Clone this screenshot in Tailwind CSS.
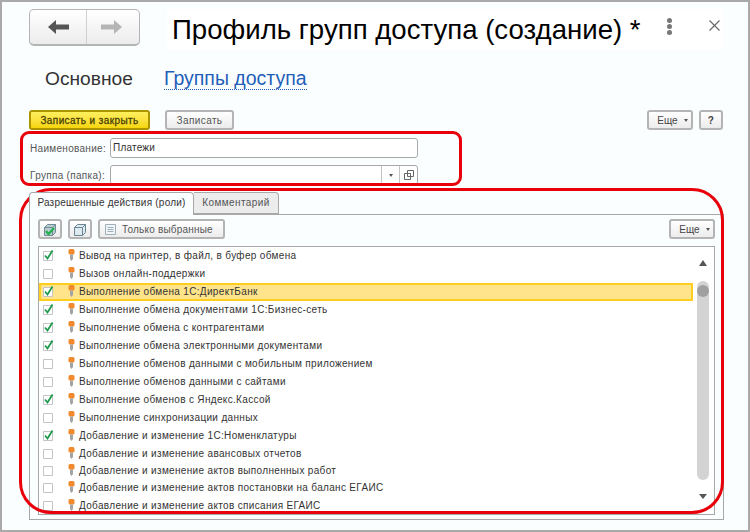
<!DOCTYPE html>
<html lang="en">
<head>
  <meta charset="UTF-8" />
  <title>Профиль групп доступа</title>
  <script src="https://cdn.jsdelivr.net/npm/@tailwindcss/browser@4"></script>
</head>
<body class="m-0 bg-white">
<div class="relative w-[750px] h-[532px] overflow-hidden bg-[#fbfeff] border-2 border-[#a9a9a9] font-['Liberation_Sans',sans-serif] text-[#333]">

  <!-- header -->
  <div class="flex items-start pl-[27px] pt-[7px] h-[57px]">
    <div class="flex w-[111px] h-[37px] rounded-[5px] border border-[#b4b4b4] border-b-2 bg-gradient-to-b from-white to-[#ececec]">
      <div class="w-[57px] flex items-center justify-center border-r border-[#d0d0d0]">
        <svg width="21" height="14" viewBox="0 0 21 14"><path d="M0 7 8 0v4.500h13v5H8V14z" fill="#555"/></svg>
      </div>
      <div class="flex-1 flex items-center justify-center pr-[4px]">
        <svg width="21" height="14" viewBox="0 0 21 14"><path d="M21 7 13 0v4.500H0v5h13V14z" fill="#b5b5b5"/></svg>
      </div>
    </div>
    <div class="ml-[27px] w-[556px] h-[41px] bg-white flex items-center pl-[5px] relative">
      <span class="text-[27.6px] text-black whitespace-nowrap leading-none">Профиль групп доступа (создание) *</span>
      <span class="absolute left-[500px] top-[9px] flex flex-col gap-[1px]">
        <i class="block w-[5px] h-[5px] rounded-full bg-[#777]"></i>
        <i class="block w-[5px] h-[5px] rounded-full bg-[#777]"></i>
        <i class="block w-[5px] h-[5px] rounded-full bg-[#777]"></i>
      </span>
      <svg class="absolute left-[542px] top-[11px]" width="11" height="11" viewBox="0 0 11 11"><path d="M.5.5l10 10M10.500.5l-10 10" stroke="#666" stroke-width="1.100" fill="none"/></svg>
    </div>
  </div>

  <!-- page tabs -->
  <div class="flex items-start pl-[43px] pt-[9px] h-[51px] text-[19.2px] leading-[21px]">
    <span class="text-[#333]">Основное</span>
    <span class="ml-[31px] text-[19.5px] text-[#1f5fb8] border-b border-dotted border-[#1f5fb8]">Группы доступа</span>
  </div>

  <!-- command bar -->
  <div class="flex items-center pl-[27px] pr-[25px] h-[20px] text-[10px] tracking-[0.4px]">
    <button class="w-[121px] h-[20px] rounded-[3px] border-2 border-[#ad9500] bg-gradient-to-b from-[#ffef5c] to-[#f6d600] text-[#4a4200] [-webkit-text-stroke:0.3px_#4a4200]">Записать и закрыть</button>
    <button class="ml-[15px] w-[69px] h-[20px] rounded-[3px] border-2 border-[#b4b4b4] bg-gradient-to-b from-white to-[#ececec] text-[#555]">Записать</button>
    <button class="ml-auto w-[46px] h-[20px] rounded-[3px] border-2 border-[#b4b4b4] bg-gradient-to-b from-white to-[#ececec] text-[#444] tracking-normal flex items-center justify-center gap-[6px] pl-[5px]">Еще <i class="block border-x-[2.5px] border-x-transparent border-t-[3px] border-t-[#555]"></i></button>
    <button class="ml-[6px] w-[24px] h-[20px] rounded-[3px] border-2 border-[#b4b4b4] bg-gradient-to-b from-white to-[#ececec] font-bold text-[#444]">?</button>
  </div>

  <!-- fields -->
  <div class="pl-[28px] pt-[8px] text-[10px] tracking-[0.3px] text-[#555]">
    <div class="flex items-center h-[20px]">
      <span class="w-[80px] whitespace-nowrap">Наименование:</span>
      <div class="w-[308px] h-[20px] rounded-[3px] border border-[#a8a8a8] bg-white pl-[2px] leading-[18px] text-[#333] tracking-[0.2px]">Платежи</div>
    </div>
    <div class="flex items-center h-[20px] mt-[7px]">
      <span class="w-[80px] whitespace-nowrap">Группа (папка):</span>
      <div class="flex w-[308px] h-[20px] rounded-[3px] border border-[#a8a8a8] bg-white">
        <div class="flex-1"></div>
        <div class="w-[18px] border-l border-[#c4c4c4] flex items-center justify-center"><i class="block border-x-[2.5px] border-x-transparent border-t-[3px] border-t-[#555]"></i></div>
        <div class="w-[18px] border-l border-[#c4c4c4] flex items-center justify-center">
          <svg width="10" height="10" viewBox="0 0 10 10"><path d="M3.500.5h6v6h-6zM.5 3.500h6v6h-6z" fill="#fff" stroke="#666"/></svg>
        </div>
      </div>
    </div>
  </div>

  <!-- tabs -->
  <div class="pl-[27px] pt-[7px] text-[10px] tracking-[0.3px]">
    <div class="flex h-[22px] relative z-10">
      <div class="w-[165px] border border-b-0 border-[#a8a8a8] rounded-t-[4px] bg-[#fbfeff] text-center leading-[19px] h-[23px] text-[#333] tracking-[0.22px]">Разрешенные действия (роли)</div>
      <div class="w-[85px] border border-l-0 border-[#a8a8a8] rounded-tr-[4px] bg-[#ececec] text-center leading-[19px] text-[#555] tracking-[0.4px]">Комментарий</div>
    </div>
    <div class="w-[695px] h-[306px] border border-[#a8a8a8] px-[8px] pt-[4px]">
      <div class="flex items-center h-[20px] gap-[6px]">
        <button class="w-[24px] h-[20px] rounded-[3px] border-2 border-[#b4b4b4] bg-gradient-to-b from-white to-[#ececec] flex items-center justify-center">
          <svg width="14" height="13" viewBox="0 0 14 13"><path d="M1.500 4.500h8v8h-8zM1.500 4.500l3-3h8v8l-3 3M9.500 4.500l3-3" fill="#b9cdd0" stroke="#6f8c94"/><path d="M3 8l2.500 3L11 5" stroke="#22b14c" stroke-width="2.200" fill="none"/></svg>
        </button>
        <button class="w-[24px] h-[20px] rounded-[3px] border-2 border-[#b4b4b4] bg-gradient-to-b from-white to-[#ececec] flex items-center justify-center">
          <svg width="14" height="13" viewBox="0 0 14 13"><path d="M1.500 4.500h8v8h-8zM1.500 4.500l3-3h8v8l-3 3M9.500 4.500l3-3" fill="#dfeaf0" stroke="#6a8593"/></svg>
        </button>
        <button class="w-[127px] h-[20px] rounded-[3px] border-2 border-[#b4b4b4] bg-gradient-to-b from-white to-[#ececec] flex items-center pl-[5px] gap-[6px] text-[#555] tracking-[0.2px]">
          <svg width="11" height="11" viewBox="0 0 11 11"><path d="M.5.5h10v10H.5z" fill="#f2f5f8" stroke="#9fb0bd"/><path d="M2.500 3.500h6M2.500 5.500h6M2.500 7.500h6" stroke="#9fb0bd"/></svg>
          Только выбранные
        </button>
        <button class="ml-auto w-[46px] h-[20px] rounded-[3px] border-2 border-[#b4b4b4] bg-gradient-to-b from-white to-[#ececec] text-[#444] tracking-normal flex items-center justify-center gap-[6px] pl-[5px]">Еще <i class="block border-x-[2.5px] border-x-transparent border-t-[3px] border-t-[#555]"></i></button>
      </div>

      <!-- role list -->
      <div class="relative mt-[7px] w-[677px] h-[269px] border border-[#a8a8a8] bg-white overflow-hidden text-[#333] tracking-[0.33px]">
        <div class="flex items-center h-[18px] pl-[4px]"><svg width="10" height="10" viewBox="0 0 10 10" class="flex-none overflow-visible -mt-[1px]"><path d="M.5.500h9v9h-9z" fill="#fff" stroke="#c4c4c4"/><path d="M2 4.500l2.500 3L9.500-.5" stroke="#1f9a4c" stroke-width="1.800" fill="none"/></svg><svg width="7" height="12" viewBox="0 0 7 12" class="ml-[15px] -mt-[3px] flex-none"><path d="M.5 1.500Q.5 0 2 0h3q1.500 0 1.500 1.500V4Q6.500 5.500 5 5.500H2Q.5 5.500.5 4z" fill="#f08a2c"/><path d="M2 5.500h3V10l-1.500 2L2 10z" fill="#a3a3a3"/></svg><span class="ml-[4px] -mt-[2px] whitespace-nowrap">Вывод на принтер, в файл, в буфер обмена</span></div>
        <div class="flex items-center h-[18px] pl-[4px]"><svg width="10" height="10" viewBox="0 0 10 10" class="flex-none overflow-visible -mt-[1px]"><path d="M.5.500h9v9h-9z" fill="#fff" stroke="#c4c4c4"/></svg><svg width="7" height="12" viewBox="0 0 7 12" class="ml-[15px] -mt-[3px] flex-none"><path d="M.5 1.500Q.5 0 2 0h3q1.500 0 1.500 1.500V4Q6.500 5.500 5 5.500H2Q.5 5.500.5 4z" fill="#f08a2c"/><path d="M2 5.500h3V10l-1.500 2L2 10z" fill="#a3a3a3"/></svg><span class="ml-[4px] -mt-[2px] whitespace-nowrap">Вызов онлайн-поддержки</span></div>
        <div class="flex items-center h-[18px] pl-[2px] w-[654px] border-[2.500px] border-[#ffce1f] bg-[#ffe48c]"><svg width="10" height="10" viewBox="0 0 10 10" class="flex-none overflow-visible -mt-[1px]"><path d="M.5.500h9v9h-9z" fill="#fff" stroke="#c4c4c4"/><path d="M2 4.500l2.500 3L9.500-.5" stroke="#1f9a4c" stroke-width="1.800" fill="none"/></svg><svg width="7" height="12" viewBox="0 0 7 12" class="ml-[15px] -mt-[3px] flex-none"><path d="M.5 1.500Q.5 0 2 0h3q1.500 0 1.500 1.500V4Q6.500 5.500 5 5.500H2Q.5 5.500.5 4z" fill="#f08a2c"/><path d="M2 5.500h3V10l-1.500 2L2 10z" fill="#a3a3a3"/></svg><span class="ml-[4px] -mt-[2px] whitespace-nowrap">Выполнение обмена 1С:ДиректБанк</span></div>
        <div class="flex items-center h-[18px] pl-[4px]"><svg width="10" height="10" viewBox="0 0 10 10" class="flex-none overflow-visible -mt-[1px]"><path d="M.5.500h9v9h-9z" fill="#fff" stroke="#c4c4c4"/><path d="M2 4.500l2.500 3L9.500-.5" stroke="#1f9a4c" stroke-width="1.800" fill="none"/></svg><svg width="7" height="12" viewBox="0 0 7 12" class="ml-[15px] -mt-[3px] flex-none"><path d="M.5 1.500Q.5 0 2 0h3q1.500 0 1.500 1.500V4Q6.500 5.500 5 5.500H2Q.5 5.500.5 4z" fill="#f08a2c"/><path d="M2 5.500h3V10l-1.500 2L2 10z" fill="#a3a3a3"/></svg><span class="ml-[4px] -mt-[2px] whitespace-nowrap">Выполнение обмена документами 1С:Бизнес-сеть</span></div>
        <div class="flex items-center h-[18px] pl-[4px]"><svg width="10" height="10" viewBox="0 0 10 10" class="flex-none overflow-visible -mt-[1px]"><path d="M.5.500h9v9h-9z" fill="#fff" stroke="#c4c4c4"/><path d="M2 4.500l2.500 3L9.500-.5" stroke="#1f9a4c" stroke-width="1.800" fill="none"/></svg><svg width="7" height="12" viewBox="0 0 7 12" class="ml-[15px] -mt-[3px] flex-none"><path d="M.5 1.500Q.5 0 2 0h3q1.500 0 1.500 1.500V4Q6.500 5.500 5 5.500H2Q.5 5.500.5 4z" fill="#f08a2c"/><path d="M2 5.500h3V10l-1.500 2L2 10z" fill="#a3a3a3"/></svg><span class="ml-[4px] -mt-[2px] whitespace-nowrap">Выполнение обмена с контрагентами</span></div>
        <div class="flex items-center h-[18px] pl-[4px]"><svg width="10" height="10" viewBox="0 0 10 10" class="flex-none overflow-visible -mt-[1px]"><path d="M.5.500h9v9h-9z" fill="#fff" stroke="#c4c4c4"/><path d="M2 4.500l2.500 3L9.500-.5" stroke="#1f9a4c" stroke-width="1.800" fill="none"/></svg><svg width="7" height="12" viewBox="0 0 7 12" class="ml-[15px] -mt-[3px] flex-none"><path d="M.5 1.500Q.5 0 2 0h3q1.500 0 1.500 1.500V4Q6.500 5.500 5 5.500H2Q.5 5.500.5 4z" fill="#f08a2c"/><path d="M2 5.500h3V10l-1.500 2L2 10z" fill="#a3a3a3"/></svg><span class="ml-[4px] -mt-[2px] whitespace-nowrap">Выполнение обмена электронными документами</span></div>
        <div class="flex items-center h-[18px] pl-[4px]"><svg width="10" height="10" viewBox="0 0 10 10" class="flex-none overflow-visible -mt-[1px]"><path d="M.5.500h9v9h-9z" fill="#fff" stroke="#c4c4c4"/></svg><svg width="7" height="12" viewBox="0 0 7 12" class="ml-[15px] -mt-[3px] flex-none"><path d="M.5 1.500Q.5 0 2 0h3q1.500 0 1.500 1.500V4Q6.500 5.500 5 5.500H2Q.5 5.500.5 4z" fill="#f08a2c"/><path d="M2 5.500h3V10l-1.500 2L2 10z" fill="#a3a3a3"/></svg><span class="ml-[4px] -mt-[2px] whitespace-nowrap">Выполнение обменов данными с мобильным приложением</span></div>
        <div class="flex items-center h-[18px] pl-[4px]"><svg width="10" height="10" viewBox="0 0 10 10" class="flex-none overflow-visible -mt-[1px]"><path d="M.5.500h9v9h-9z" fill="#fff" stroke="#c4c4c4"/></svg><svg width="7" height="12" viewBox="0 0 7 12" class="ml-[15px] -mt-[3px] flex-none"><path d="M.5 1.500Q.5 0 2 0h3q1.500 0 1.500 1.500V4Q6.500 5.500 5 5.500H2Q.5 5.500.5 4z" fill="#f08a2c"/><path d="M2 5.500h3V10l-1.500 2L2 10z" fill="#a3a3a3"/></svg><span class="ml-[4px] -mt-[2px] whitespace-nowrap">Выполнение обменов данными с сайтами</span></div>
        <div class="flex items-center h-[18px] pl-[4px]"><svg width="10" height="10" viewBox="0 0 10 10" class="flex-none overflow-visible -mt-[1px]"><path d="M.5.500h9v9h-9z" fill="#fff" stroke="#c4c4c4"/><path d="M2 4.500l2.500 3L9.500-.5" stroke="#1f9a4c" stroke-width="1.800" fill="none"/></svg><svg width="7" height="12" viewBox="0 0 7 12" class="ml-[15px] -mt-[3px] flex-none"><path d="M.5 1.500Q.5 0 2 0h3q1.500 0 1.500 1.500V4Q6.500 5.500 5 5.500H2Q.5 5.500.5 4z" fill="#f08a2c"/><path d="M2 5.500h3V10l-1.500 2L2 10z" fill="#a3a3a3"/></svg><span class="ml-[4px] -mt-[2px] whitespace-nowrap">Выполнение обменов с Яндекс.Кассой</span></div>
        <div class="flex items-center h-[18px] pl-[4px]"><svg width="10" height="10" viewBox="0 0 10 10" class="flex-none overflow-visible -mt-[1px]"><path d="M.5.500h9v9h-9z" fill="#fff" stroke="#c4c4c4"/></svg><svg width="7" height="12" viewBox="0 0 7 12" class="ml-[15px] -mt-[3px] flex-none"><path d="M.5 1.500Q.5 0 2 0h3q1.500 0 1.500 1.500V4Q6.500 5.500 5 5.500H2Q.5 5.500.5 4z" fill="#f08a2c"/><path d="M2 5.500h3V10l-1.500 2L2 10z" fill="#a3a3a3"/></svg><span class="ml-[4px] -mt-[2px] whitespace-nowrap">Выполнение синхронизации данных</span></div>
        <div class="flex items-center h-[18px] pl-[4px]"><svg width="10" height="10" viewBox="0 0 10 10" class="flex-none overflow-visible -mt-[1px]"><path d="M.5.500h9v9h-9z" fill="#fff" stroke="#c4c4c4"/><path d="M2 4.500l2.500 3L9.500-.5" stroke="#1f9a4c" stroke-width="1.800" fill="none"/></svg><svg width="7" height="12" viewBox="0 0 7 12" class="ml-[15px] -mt-[3px] flex-none"><path d="M.5 1.500Q.5 0 2 0h3q1.500 0 1.500 1.500V4Q6.500 5.500 5 5.500H2Q.5 5.500.5 4z" fill="#f08a2c"/><path d="M2 5.500h3V10l-1.500 2L2 10z" fill="#a3a3a3"/></svg><span class="ml-[4px] -mt-[2px] whitespace-nowrap">Добавление и изменение 1С:Номенклатуры</span></div>
        <div class="flex items-center h-[18px] pl-[4px]"><svg width="10" height="10" viewBox="0 0 10 10" class="flex-none overflow-visible -mt-[1px]"><path d="M.5.500h9v9h-9z" fill="#fff" stroke="#c4c4c4"/></svg><svg width="7" height="12" viewBox="0 0 7 12" class="ml-[15px] -mt-[3px] flex-none"><path d="M.5 1.500Q.5 0 2 0h3q1.500 0 1.500 1.500V4Q6.500 5.500 5 5.500H2Q.5 5.500.5 4z" fill="#f08a2c"/><path d="M2 5.500h3V10l-1.500 2L2 10z" fill="#a3a3a3"/></svg><span class="ml-[4px] -mt-[2px] whitespace-nowrap">Добавление и изменение авансовых отчетов</span></div>
        <div class="flex items-center h-[16px] pl-[4px]"><svg width="10" height="10" viewBox="0 0 10 10" class="flex-none overflow-visible -mt-[1px]"><path d="M.5.500h9v9h-9z" fill="#fff" stroke="#c4c4c4"/></svg><svg width="7" height="12" viewBox="0 0 7 12" class="ml-[15px] -mt-[3px] flex-none"><path d="M.5 1.500Q.5 0 2 0h3q1.500 0 1.500 1.500V4Q6.500 5.500 5 5.500H2Q.5 5.500.5 4z" fill="#f08a2c"/><path d="M2 5.500h3V10l-1.500 2L2 10z" fill="#a3a3a3"/></svg><span class="ml-[4px] -mt-[2px] whitespace-nowrap">Добавление и изменение актов выполненных работ</span></div>
        <div class="flex items-center h-[18px] pl-[4px]"><svg width="10" height="10" viewBox="0 0 10 10" class="flex-none overflow-visible -mt-[1px]"><path d="M.5.500h9v9h-9z" fill="#fff" stroke="#c4c4c4"/></svg><svg width="7" height="12" viewBox="0 0 7 12" class="ml-[15px] -mt-[3px] flex-none"><path d="M.5 1.500Q.5 0 2 0h3q1.500 0 1.500 1.500V4Q6.500 5.500 5 5.500H2Q.5 5.500.5 4z" fill="#f08a2c"/><path d="M2 5.500h3V10l-1.500 2L2 10z" fill="#a3a3a3"/></svg><span class="ml-[4px] -mt-[2px] whitespace-nowrap">Добавление и изменение актов постановки на баланс ЕГАИС</span></div>
        <div class="flex items-center h-[18px] pl-[4px]"><svg width="10" height="10" viewBox="0 0 10 10" class="flex-none overflow-visible -mt-[1px]"><path d="M.5.500h9v9h-9z" fill="#fff" stroke="#c4c4c4"/></svg><svg width="7" height="12" viewBox="0 0 7 12" class="ml-[15px] -mt-[3px] flex-none"><path d="M.5 1.500Q.5 0 2 0h3q1.500 0 1.500 1.500V4Q6.500 5.500 5 5.500H2Q.5 5.500.5 4z" fill="#f08a2c"/><path d="M2 5.500h3V10l-1.500 2L2 10z" fill="#a3a3a3"/></svg><span class="ml-[4px] -mt-[2px] whitespace-nowrap">Добавление и изменение актов списания ЕГАИС</span></div>

        <!-- scrollbar -->
        <div class="absolute right-[5px] top-0 bottom-0 w-[12px] flex flex-col items-center">
          <i class="block mt-[13px] border-x-[4px] border-x-transparent border-b-[6px] border-b-[#555]"></i>
          <div class="mt-[15px] w-[12px] h-[199px] rounded-full bg-[#d3d3d3] relative">
            <i class="absolute top-[4px] left-0 w-[12px] h-[12px] rounded-full bg-[#a0a0a0]"></i>
          </div>
          <i class="block mt-[14px] border-x-[4px] border-x-transparent border-t-[5px] border-t-[#555]"></i>
        </div>
      </div>
    </div>
  </div>

  <!-- red annotation frames -->
  <div class="absolute left-[18px] top-[129px] w-[442px] h-[55px] rounded-[9px] border-[3px] border-[#e8000b]"></div>
  <div class="absolute left-[17px] top-[186px] w-[705px] h-[326px] rounded-[32px] border-[3px] border-[#e8000b]"></div>
</div>
</body>
</html>
